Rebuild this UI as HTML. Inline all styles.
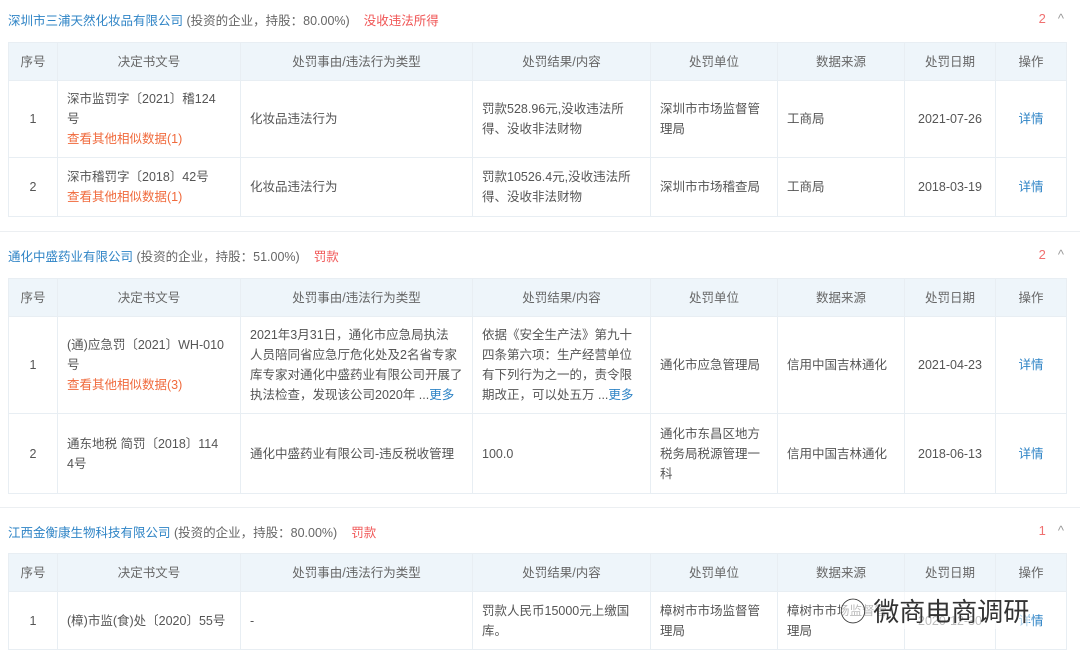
<!DOCTYPE html>
<html><head><meta charset="utf-8"><style>
body{margin:0;width:1080px;height:659px;overflow:hidden;background:#fff;font-family:"Liberation Sans","Noto Sans CJK SC",sans-serif;font-size:12.5px;color:#555;position:relative}
.t{position:absolute;left:8px;font-size:12.5px;color:#666;white-space:nowrap}
.t a{color:#2f84c6}
.t .r{color:#f05656;margin-left:14px}
.cnt{position:absolute;right:16px;font-size:13px;color:#f07070}
.cnt span{color:#999;margin-left:12px}
table{position:absolute;left:8px;width:1058px;border-collapse:collapse;table-layout:fixed}
td,th{border:1px solid #e8eef3;padding:0 9px;line-height:20px;font-weight:normal;vertical-align:middle;white-space:nowrap;overflow:hidden}
th{background:#eef5fa;height:37px;color:#666;text-align:center}
td.c{text-align:center}
.o{color:#f06a3c}
.b{color:#2f84c6}
.sep{position:absolute;left:0;width:1080px;height:1px;background:#eceff2}
</style></head><body>
<div class="t" style="top:10px"><a>深圳市三浦天然化妆品有限公司</a> (投资的企业，持股：80.00%)<span class="r">没收违法所得</span></div>
<div class="cnt" style="top:11px">2<span>^</span></div>
<table style="top:42px">
<colgroup><col style="width:49px"><col style="width:183px"><col style="width:232px"><col style="width:178px"><col style="width:127px"><col style="width:127px"><col style="width:91px"><col style="width:71px"></colgroup>
<tr><th>序号</th><th>决定书文号</th><th>处罚事由/违法行为类型</th><th>处罚结果/内容</th><th>处罚单位</th><th>数据来源</th><th>处罚日期</th><th>操作</th></tr>
<tr style="height:77px"><td class="c">1</td><td>深市监罚字〔2021〕稽124<br>号<br><span class="o">查看其他相似数据(1)</span></td><td>化妆品违法行为</td><td>罚款528.96元,没收违法所<br>得、没收非法财物</td><td>深圳市市场监督管<br>理局</td><td>工商局</td><td class="c">2021-07-26</td><td class="c b">详情</td></tr>
<tr style="height:59px"><td class="c">2</td><td>深市稽罚字〔2018〕42号<br><span class="o">查看其他相似数据(1)</span></td><td>化妆品违法行为</td><td>罚款10526.4元,没收违法所<br>得、没收非法财物</td><td>深圳市市场稽查局</td><td>工商局</td><td class="c">2018-03-19</td><td class="c b">详情</td></tr>
</table>
<div class="sep" style="top:231px"></div>
<div class="t" style="top:246px"><a>通化中盛药业有限公司</a> (投资的企业，持股：51.00%)<span class="r">罚款</span></div>
<div class="cnt" style="top:247px">2<span>^</span></div>
<table style="top:278px">
<colgroup><col style="width:49px"><col style="width:183px"><col style="width:232px"><col style="width:178px"><col style="width:127px"><col style="width:127px"><col style="width:91px"><col style="width:71px"></colgroup>
<tr><th>序号</th><th>决定书文号</th><th>处罚事由/违法行为类型</th><th>处罚结果/内容</th><th>处罚单位</th><th>数据来源</th><th>处罚日期</th><th>操作</th></tr>
<tr style="height:97px"><td class="c">1</td><td>(通)应急罚〔2021〕WH-010<br>号<br><span class="o">查看其他相似数据(3)</span></td><td>2021年3月31日，通化市应急局执法<br>人员陪同省应急厅危化处及2名省专家<br>库专家对通化中盛药业有限公司开展了<br>执法检查，发现该公司2020年 ...<span class="b">更多</span></td><td>依据《安全生产法》第九十<br>四条第六项：生产经营单位<br>有下列行为之一的，责令限<br>期改正，可以处五万 ...<span class="b">更多</span></td><td>通化市应急管理局</td><td>信用中国吉林通化</td><td class="c">2021-04-23</td><td class="c b">详情</td></tr>
<tr style="height:80px"><td class="c">2</td><td>通东地税 简罚〔2018〕114<br>4号</td><td>通化中盛药业有限公司-违反税收管理</td><td>100.0</td><td>通化市东昌区地方<br>税务局税源管理一<br>科</td><td>信用中国吉林通化</td><td class="c">2018-06-13</td><td class="c b">详情</td></tr>
</table>
<div class="sep" style="top:507px"></div>
<div class="t" style="top:522px"><a>江西金衡康生物科技有限公司</a> (投资的企业，持股：80.00%)<span class="r">罚款</span></div>
<div class="cnt" style="top:523px">1<span>^</span></div>
<table style="top:553px">
<colgroup><col style="width:49px"><col style="width:183px"><col style="width:232px"><col style="width:178px"><col style="width:127px"><col style="width:127px"><col style="width:91px"><col style="width:71px"></colgroup>
<tr><th>序号</th><th>决定书文号</th><th>处罚事由/违法行为类型</th><th>处罚结果/内容</th><th>处罚单位</th><th>数据来源</th><th>处罚日期</th><th>操作</th></tr>
<tr style="height:58px"><td class="c">1</td><td>(樟)市监(食)处〔2020〕55号</td><td>-</td><td>罚款人民币15000元上缴国<br>库。</td><td>樟树市市场监督管<br>理局</td><td>樟树市市场监督管<br>理局</td><td class="c">2020-12-30</td><td class="c b">详情</td></tr>
</table>
<div style="position:absolute;left:840px;top:592px;font-size:26px;color:#333;background:rgba(255,255,255,.6);white-space:nowrap">◯ 微商电商调研</div>
</body></html>
